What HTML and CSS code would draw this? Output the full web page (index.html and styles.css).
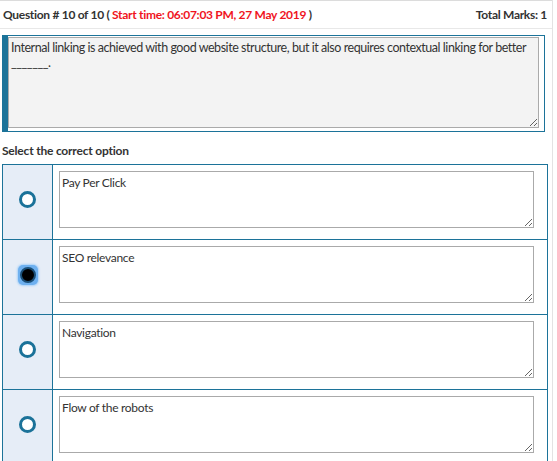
FILE: index.html
```html
<!DOCTYPE html>
<html lang="en">
<head>
    <meta charset="UTF-8">
    <title>Question 10 of 10</title>
    <link rel="stylesheet" href="styles.css">
</head>
<body>
    <div class="page">
        <div class="q-head">
            <span>Question # 10 of 10 ( <span class="start-time">Start time: 06:07:03 PM, 27 May 2019</span> )</span>
            <span>Total Marks: 1</span>
        </div>

        <div class="q-box">
            <textarea class="q-text" readonly>Internal linking is achieved with good website structure, but it also requires contextual linking for better _______.</textarea>
        </div>

        <div class="select-title">Select the correct option</div>

        <table class="options">
            <tr>
                <td class="opt-radio"><input type="radio" name="answer"></td>
                <td class="opt-text"><textarea readonly>Pay Per Click</textarea></td>
            </tr>
            <tr>
                <td class="opt-radio"><span class="focus-ring"><input type="radio" name="answer" checked></span></td>
                <td class="opt-text"><textarea readonly>SEO relevance</textarea></td>
            </tr>
            <tr>
                <td class="opt-radio"><input type="radio" name="answer"></td>
                <td class="opt-text"><textarea readonly>Navigation</textarea></td>
            </tr>
            <tr>
                <td class="opt-radio"><input type="radio" name="answer"></td>
                <td class="opt-text"><textarea readonly>Flow of the robots</textarea></td>
            </tr>
        </table>
    </div>
</body>
</html>
```

FILE: styles.css
```css
body {
    margin: 0;
    padding: 0;
    font-family: "Source Sans Pro", Lato, Arial, sans-serif;
    color: #333;
    background-color: #fff;
}

.page {
    width: 552px;
    border-right: 1px solid #e3e3e3;
}

/* question header */
.q-head {
    display: flex;
    justify-content: space-between;
    align-items: center;
    height: 27px;
    padding: 0 5px 0 3px;
    border-top: 1px solid #dcdcdc;
    border-bottom: 1px solid #e8e8e8;
    font-size: 12px;
    font-weight: bold;
    letter-spacing: -0.3px;
}

.start-time {
    color: #f0141e;
}

.q-box {
    margin: 6px 7px 0 2px;
    border: 1px solid #1c7399;
    border-left-width: 6px;
    padding: 1px 5px 3px 0;
}

.q-text {
    display: block;
    width: 100%;
    height: 91px;
    box-sizing: border-box;
    margin: 0;
    padding: 2px 2px;
    background-color: #f3f3f3;
    border: 1px solid #aaa;
    font-family: inherit;
    font-size: 12.5px;
    letter-spacing: -0.45px;
    line-height: 15px;
    color: #333;
}

.select-title {
    margin: 12px 0 0 2px;
    font-size: 12px;
    font-weight: bold;
    letter-spacing: -0.2px;
    height: 20px;
    line-height: 14px;
}

/* options */
.options {
    margin-left: 2px;
    width: 546px;
    border-collapse: collapse;
}

.options td {
    border: 1px solid #1c7399;
    height: 74px;
    padding: 0;
    vertical-align: top;
}

.opt-radio {
    width: 49px;
    background-color: #e6edf7;
    text-align: center;
    line-height: 0;
    vertical-align: middle !important;
}

.opt-radio input {
    appearance: none;
    -webkit-appearance: none;
    display: block;
    width: 17px;
    height: 17px;
    margin: -5px auto 0 16px;
    box-sizing: border-box;
    border: 3px solid #1b7299;
    border-radius: 50%;
    background-color: #fff;
}

.focus-ring {
    display: inline-block;
    padding: 2px;
    margin: -5px 0 0 1px;
    border-radius: 5px;
    background-color: #6eb0ef;
    box-shadow: 0 0 2px 1px #a9d2f8;
}

.focus-ring input:checked {
    margin: 0;
    width: 16px;
    height: 16px;
    border: 2px solid #1a4f78;
    background-color: #000;
}

.opt-text textarea {
    display: block;
    width: 475px;
    height: 57px;
    box-sizing: border-box;
    margin: 6px 0 0 6px;
    padding: 3px 2px;
    border: 1px solid #aaa;
    font-family: inherit;
    font-size: 12px;
    letter-spacing: -0.3px;
    color: #333;
    background-color: #fff;
}
```
